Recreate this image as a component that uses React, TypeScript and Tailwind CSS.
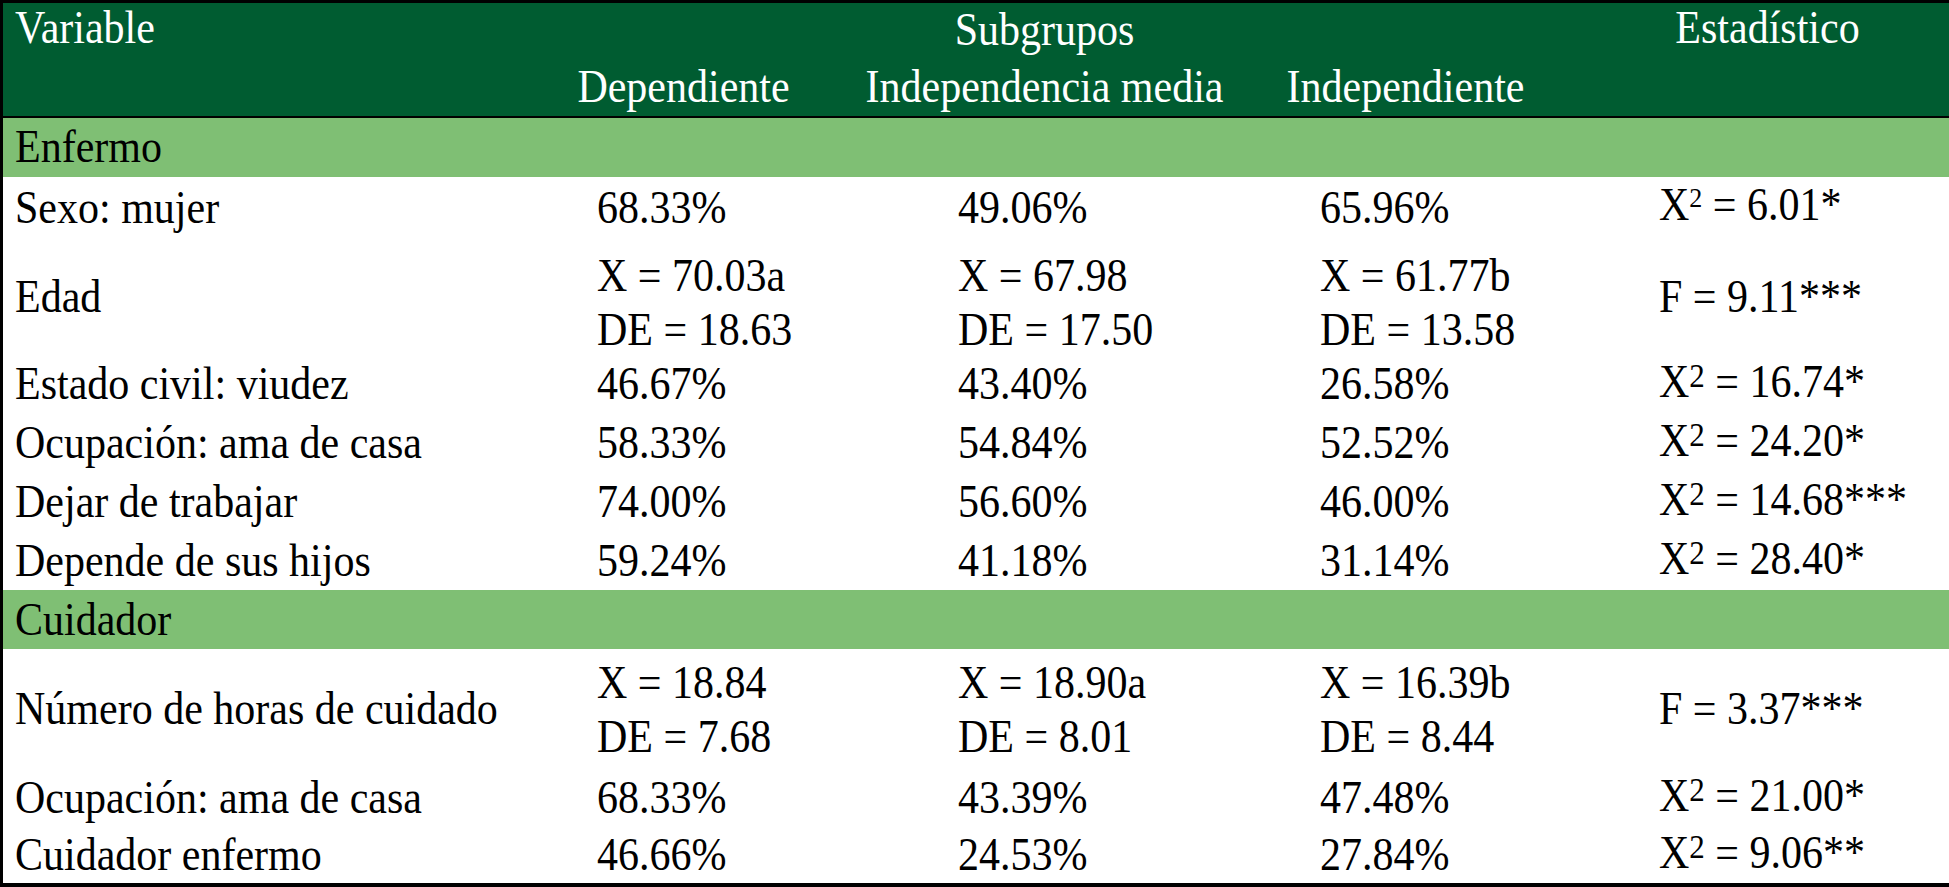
const sq = (
  <span className="relative -top-[12px] text-[26px]">2</span>
);
const sq2 = (
  <span className="relative -top-[9px] text-[31px]">2</span>
);

type Row = {
  label: string;
  cells: React.ReactNode[];
  stat: React.ReactNode;
  h: string;
};

const two = (a: string, b: string, pad = "") => (
  <div className={`leading-[50px] ${pad}`}>
    <div>{a}</div>
    <div>{b}</div>
  </div>
);

const enfermo: Row[] = [
  { label: "Sexo: mujer", cells: ["68.33%", "49.06%", "65.96%"], stat: <>X{sq} = 6.01*</>, h: "h-[62px]" },
  {
    label: "Edad",
    cells: [
      two("X = 70.03a", "DE = 18.63", "pt-[10px]"),
      two("X = 67.98", "DE = 17.50", "pt-[10px]"),
      two("X = 61.77b", "DE = 13.58", "pt-[10px]"),
    ],
    stat: "F = 9.11***",
    h: "h-[116px]",
  },
  { label: "Estado civil: viudez", cells: ["46.67%", "43.40%", "26.58%"], stat: <>X{sq2} = 16.74*</>, h: "h-[59px]" },
  { label: "Ocupación: ama de casa", cells: ["58.33%", "54.84%", "52.52%"], stat: <>X{sq2} = 24.20*</>, h: "h-[59px]" },
  { label: "Dejar de trabajar", cells: ["74.00%", "56.60%", "46.00%"], stat: <>X{sq2} = 14.68***</>, h: "h-[59px]" },
  { label: "Depende de sus hijos", cells: ["59.24%", "41.18%", "31.14%"], stat: <>X{sq2} = 28.40*</>, h: "h-[59px]" },
];

const cuidador: Row[] = [
  {
    label: "Número de horas de cuidado",
    cells: [
      two("X = 18.84", "DE = 7.68", "pt-[2px]"),
      two("X = 18.90a", "DE = 8.01", "pt-[2px]"),
      two("X = 16.39b", "DE = 8.44", "pt-[2px]"),
    ],
    stat: "F = 3.37***",
    h: "h-[120px]",
  },
  { label: "Ocupación: ama de casa", cells: ["68.33%", "43.39%", "47.48%"], stat: <>X{sq2} = 21.00*</>, h: "h-[57px]" },
  { label: "Cuidador enfermo", cells: ["46.66%", "24.53%", "27.84%"], stat: <>X{sq2} = 9.06**</>, h: "h-[57px]" },
];

function DataRow({ row }: { row: Row }) {
  return (
    <div className={`grid grid-cols-[594px_361px_362px_339px_1fr] items-center ${row.h}`}>
      <div className="scale-y-[1.08] pl-[12px]">{row.label}</div>
      {row.cells.map((c, i) => (
        <div key={i} className="scale-y-[1.08]">
          {c}
        </div>
      ))}
      <div className="scale-y-[1.08]">{row.stat}</div>
    </div>
  );
}

function Band({ title }: { title: string }) {
  return (
    <div className="flex h-[59px] items-center bg-[#7fbf74] pl-[12px] text-black">
      <span className="inline-block scale-y-[1.08]">{title}</span>
    </div>
  );
}

export default function App() {
  return (
    <div className="h-[887px] w-[1949px] overflow-hidden bg-white font-['Liberation_Serif',serif] text-[42px] leading-[50px] text-black">
      <div className="flex h-[887px] flex-col border-t-[3px] border-b-[4px] border-l-[3px] border-black">
        <div className="h-[115px] border-b-[2px] border-black bg-[#005c31] text-white">
          <div className="grid scale-y-[1.08] grid-cols-[500px_361px_361px_361px_1fr]">
            <div className="pl-[12px]">Variable</div>
            <div className="col-span-3 pt-[2px] text-center">Subgrupos</div>
            <div className="text-center">Estadístico</div>
          </div>
          <div className="mt-[7px] grid scale-y-[1.08] grid-cols-[500px_361px_361px_361px_1fr]">
            <div />
            <div className="text-center">Dependiente</div>
            <div className="text-center">Independencia media</div>
            <div className="text-center">Independiente</div>
            <div />
          </div>
        </div>
        <Band title="Enfermo" />
        {enfermo.map((r) => (
          <DataRow key={r.label} row={r} />
        ))}
        <Band title="Cuidador" />
        {cuidador.map((r) => (
          <DataRow key={r.label + "c"} row={r} />
        ))}
      </div>
    </div>
  );
}
